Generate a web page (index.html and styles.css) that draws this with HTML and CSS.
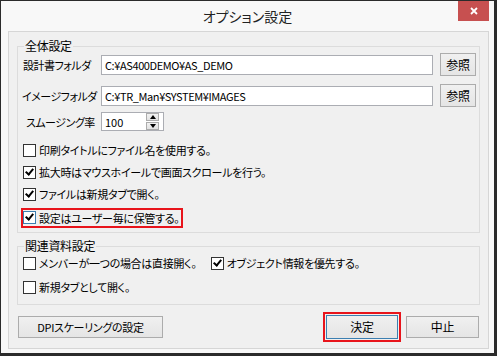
FILE: index.html
```html
<!DOCTYPE html>
<html lang="ja">
<head>
    <meta charset="UTF-8">
    <meta name="viewport" content="width=device-width, initial-scale=1.0">
    <title>オプション設定</title>
    <link rel="stylesheet" href="styles.css">
</head>
<body>
    <div class="window">
        <div class="titlebar">
            <span class="title">オプション設定</span>
            <button type="button" class="close" aria-label="閉じる">
                <svg width="8" height="8" viewBox="0 0 8 8">
                    <path d="M1 1 L7 7 M7 1 L1 7" stroke="#fff" stroke-width="1.8" fill="none"/>
                </svg>
            </button>
        </div>

        <div class="content">
            <!-- 全体設定 -->
            <div class="group group-main">
                <span class="group-title">全体設定</span>

                <div class="path-row">
                    <label class="field-label">設計書フォルダ</label>
                    <div class="textbox">C:¥AS400DEMO¥AS_DEMO</div>
                    <button type="button" class="btn btn-browse">参照</button>
                </div>
                <div class="path-row second">
                    <label class="field-label">イメージフォルダ</label>
                    <div class="textbox">C:¥TR_Man¥SYSTEM¥IMAGES</div>
                    <button type="button" class="btn btn-browse">参照</button>
                </div>
                <div class="spin-row">
                    <label class="field-label">スムージング率</label>
                    <div class="spinbox">
                        <span>100</span>
                        <div class="spin-btns">
                            <span class="spin up"></span>
                            <span class="spin down"></span>
                        </div>
                    </div>
                </div>

                <div class="check-list">
                    <div class="check-row">
                        <label class="check"><span class="box"></span>印刷タイトルにファイル名を使用する。</label>
                    </div>
                    <div class="check-row">
                        <label class="check"><span class="box checked"></span>拡大時はマウスホイールで画面スクロールを行う。</label>
                    </div>
                    <div class="check-row">
                        <label class="check"><span class="box checked"></span>ファイルは新規タブで開く。</label>
                    </div>
                    <div class="check-row">
                        <label class="check highlight"><span class="box checked focus"></span>設定はユーザー毎に保管する。</label>
                    </div>
                </div>
            </div>

            <!-- 関連資料設定 -->
            <div class="group group-related">
                <span class="group-title">関連資料設定</span>
                <div class="check-row first">
                    <label class="check"><span class="box"></span>メンバーが一つの場合は直接開く。</label>
                    <label class="check right"><span class="box checked"></span>オブジェクト情報を優先する。</label>
                </div>
                <div class="check-row">
                    <label class="check"><span class="box"></span>新規タブとして開く。</label>
                </div>
            </div>

            <div class="actions">
                <button type="button" class="btn btn-dpi">DPIスケーリングの設定</button>
                <button type="button" class="btn btn-ok">決定</button>
                <button type="button" class="btn btn-cancel">中止</button>
            </div>
        </div>
    </div>
</body>
</html>
```

FILE: styles.css
```css
body {
    margin: 0;
    padding: 0;
    font-family: "Noto Sans CJK JP", "Noto Sans", sans-serif;
    font-size: 11px;
    line-height: 14px;
    letter-spacing: -0.3px;
    color: #000;
    background: #fff;
}
.window {
    width: 493px;
    height: 352px;
    border-style: solid;
    border-color: #2b2b2b;
    border-width: 1px 3px 3px 1px;
    background: #f8f8f8;
}
.titlebar {
    display: grid;
    grid-template-columns: 1fr auto 1fr;
    height: 30px;
}
.title {
    grid-column: 2;
    align-self: center;
    font-size: 14px;
    line-height: 16px;
    letter-spacing: 0;
    font-feature-settings: "palt";
    color: #222;
}
.close {
    grid-column: 3;
    justify-self: end;
    align-self: start;
    width: 31px;
    height: 20px;
    margin-right: 5px;
    padding: 0;
    border: none;
    background: #c75050;
    display: flex;
    align-items: center;
    justify-content: center;
}
.content {
    margin-left: 7px;
    width: 479px;
    height: 302px;
    border: 1px solid #d6d6d6;
    background: #f0f0f0;
    padding-top: 14px;
}
.group {
    position: relative;
    margin: 0 8px;
    border: 1px solid #dcdcdc;
}
.group-title {
    position: absolute;
    top: -8px;
    left: 6px;
    padding: 0 1px;
    background: #f0f0f0;
    font-size: 12px;
    font-feature-settings: "palt";
}
.group-main {
    height: 185px;
}
.path-row {
    display: flex;
    align-items: center;
    height: 23px;
    margin-top: 6px;
}
.path-row.second {
    margin-top: 8px;
}
.field-label {
    flex: none;
    width: 78px;
    padding-left: 5px;
    white-space: nowrap;
    letter-spacing: -0.5px;
    font-feature-settings: "palt";
}
.path-row.second .field-label {
    width: 79px;
    padding-left: 4px;
}
.textbox {
    width: 327px;
    height: 18px;
    padding-left: 3px;
    border: 1px solid #abadb3;
    background: #fff;
    display: flex;
    align-items: center;
    white-space: nowrap;
    letter-spacing: -0.4px;
}
.btn {
    font-family: inherit;
    font-size: 11px;
    line-height: 14px;
    letter-spacing: -0.3px;
    color: #000;
    padding: 0;
    border: 1px solid #acacac;
    background: linear-gradient(#f0f0f0, #e5e5e5);
    font-feature-settings: "palt";
}
.btn-browse {
    width: 36px;
    height: 23px;
    margin-left: 7px;
    font-size: 12px;
}
.spin-row {
    display: flex;
    align-items: center;
    height: 19px;
    margin-top: 5px;
}
.spin-row .field-label {
    padding-left: 8px;
    width: 75px;
}
.spinbox {
    width: 55px;
    height: 17px;
    padding: 0 4px 0 2px;
    border: 1px solid #abadb3;
    background: #fff;
    display: flex;
    align-items: center;
    justify-content: space-between;
    letter-spacing: 0;
}
.spinbox span {
    padding-left: 1px;
}
.spin-btns {
    display: flex;
    flex-direction: column;
    gap: 1px;
}
.spin {
    width: 10px;
    height: 6px;
    border: 1px solid #acacac;
    background: linear-gradient(#f2f2f2, #e2e2e2);
    display: flex;
    align-items: center;
    justify-content: center;
}
.spin.up::before {
    content: "";
    border-left: 3.5px solid transparent;
    border-right: 3.5px solid transparent;
    border-bottom: 4px solid #000;
}
.spin.down::before {
    content: "";
    border-left: 3.5px solid transparent;
    border-right: 3.5px solid transparent;
    border-top: 4px solid #000;
}
.check-list {
    margin-top: 8px;
}
.check-row {
    display: flex;
    align-items: center;
    height: 22px;
    padding-left: 5px;
}
.check {
    display: inline-flex;
    align-items: center;
    gap: 3px;
    white-space: nowrap;
    font-feature-settings: "palt";
}
.check.highlight {
    outline: 2px solid #e8141b;
    padding: 1px 2px 1px 0;
    margin-top: 3px;
}
.box {
    flex: none;
    width: 11px;
    height: 11px;
    border: 1px solid #333;
    background: #fff;
    position: relative;
}
.box.checked::after {
    content: "";
    position: absolute;
    left: 3px;
    top: 0;
    width: 3px;
    height: 6px;
    border-right: 2px solid #000;
    border-bottom: 2px solid #000;
    transform: rotate(40deg);
}
.box.focus {
    border-color: #3c7fb1;
}
.group-related {
    margin-top: 13px;
    height: 57px;
}
.group-related .check-row.first {
    margin-top: 5px;
    margin-bottom: 2px;
}
.check.right {
    margin-left: 14px;
}
.actions {
    display: flex;
    align-items: center;
    margin-top: 10px;
    padding: 0 9px;
}
.btn-dpi {
    width: 145px;
    height: 22px;
}
.btn-ok {
    width: 72px;
    height: 24px;
    margin-left: auto;
    border-color: #3c7fb1;
    outline: 2px solid #e8141b;
    outline-offset: 1px;
    font-size: 12px;
}
.btn-cancel {
    width: 73px;
    height: 22px;
    margin-left: 8px;
    font-size: 12px;
}
```
